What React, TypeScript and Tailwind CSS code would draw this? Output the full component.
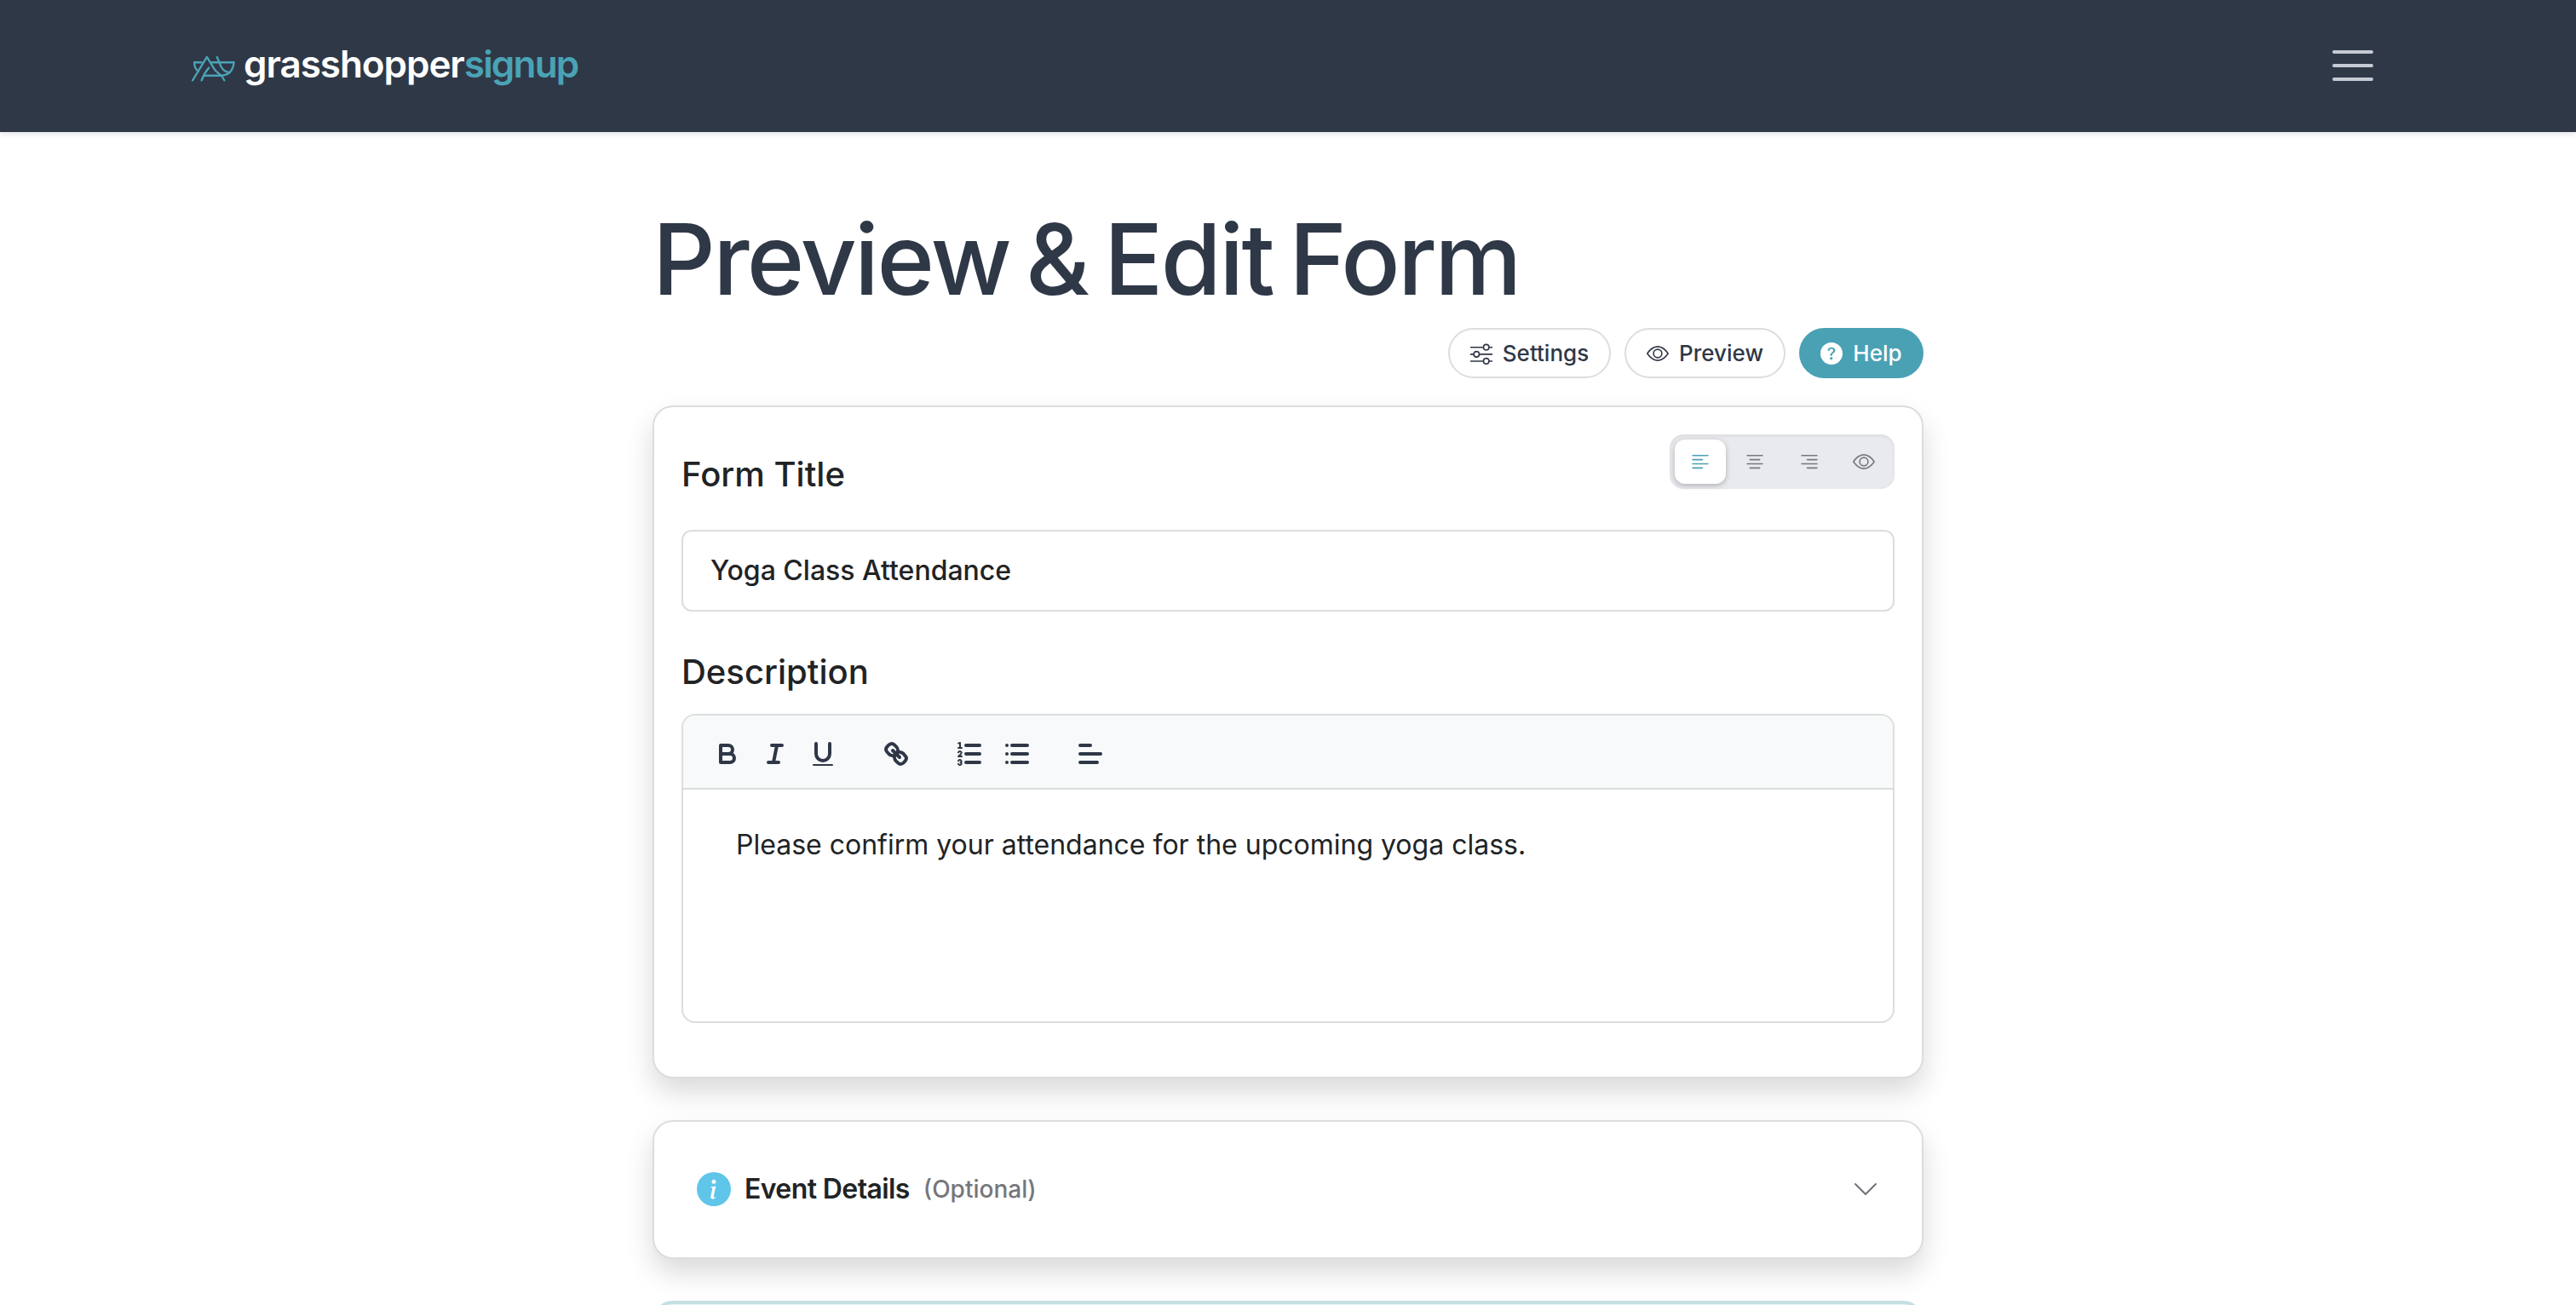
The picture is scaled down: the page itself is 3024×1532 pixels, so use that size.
import React from "react";
import {
  BsSliders,
  BsEye,
  BsQuestionCircleFill,
  BsTextLeft,
  BsTextCenter,
  BsTextRight,
  BsInfoCircleFill,
  BsChevronDown,
} from "react-icons/bs";

function ToolIcon({ children }: { children: React.ReactNode }) {
  return (
    <button className="flex h-14 w-14 items-center justify-center">
      <svg
        viewBox="0 0 18 18"
        className="h-9 w-9"
        fill="none"
        stroke="#2f3747"
        strokeWidth="2"
        strokeLinecap="round"
        strokeLinejoin="round"
      >
        {children}
      </svg>
    </button>
  );
}

function Header() {
  return (
    <header className="flex h-[155px] items-center justify-between bg-[#2f3847] pl-[224px] pr-[238px] shadow-[0_2px_6px_rgba(0,0,0,0.12)]">
      <a className="flex items-center">
        <svg
          viewBox="74 100 160 100"
          className="mt-[5px] h-[33px] w-[53px]"
          fill="none"
          stroke="#4aa3b5"
          strokeWidth="7"
          strokeLinecap="round"
          strokeLinejoin="round"
        >
          <path d="M80 192 L131 109 L155 148 Q162 160 174 168 Q186 176 193 192" />
          <path d="M112 128 H86 Q86 148 100 160" />
          <path d="M148 128 H227 Q222 175 180 175 H123" />
          <path d="M112 192 Q120 168 138 147" />
          <path d="M167 109 L180 140 Q190 162 212 164" />
        </svg>
        <span className="ml-[9px] mt-[-6px] text-[44px] font-semibold leading-none tracking-[-1.05px] text-white">
          grasshopper<span className="tracking-[-1.8px] text-[#4aa3b5]">signup</span>
        </span>
      </a>
      <button className="mb-px flex w-12 flex-col gap-3">
        <span className="h-1 rounded-full bg-[#c6cad3]" />
        <span className="h-1 rounded-full bg-[#c6cad3]" />
        <span className="h-1 rounded-full bg-[#c6cad3]" />
      </button>
    </header>
  );
}

const CARD = "rounded-[24px] border-2 border-[#dcdddd] bg-white shadow-[0_16px_32px_rgba(0,0,0,0.15)]";

export default function App() {
  return (
    <div className="h-[1532px] overflow-hidden bg-white font-['Inter',sans-serif] text-[#212325]">
      <Header />
      <main className="mx-auto w-[1492px]">
        <h1 className="mt-[78px] h-[145px] whitespace-nowrap text-[115px] font-medium leading-[144px] tracking-[-2.6px] text-[#2f3847] [word-spacing:-9px]">
          Preview &amp; Edit Form
        </h1>
        <div className="mt-[7px] flex h-[59px] justify-end gap-4 text-[26px] font-medium text-[#2f3747]">
          <button className="flex w-[191px] items-center justify-center gap-3 rounded-full border-2 border-[#dcdddd]">
            <BsSliders className="h-[26px] w-[26px]" />
            Settings
          </button>
          <button className="flex w-[189px] items-center justify-center gap-3 rounded-full border-2 border-[#dcdddd]">
            <BsEye className="h-[26px] w-[26px]" />
            Preview
          </button>
          <button className="flex w-[146px] items-center justify-center gap-3 rounded-full bg-[#4aa1b4] text-white">
            <BsQuestionCircleFill className="h-[26px] w-[26px]" />
            Help
          </button>
        </div>

        <section className={`mt-8 h-[790px] px-8 pt-8 ${CARD}`}>
          <div className="flex h-[112px] items-start justify-between">
            <h2 className="mt-[17px] text-[40px] font-medium leading-[60px]">Form Title</h2>
            <div className="flex h-16 w-[264px] items-center gap-1 rounded-[16px] bg-[#e9eaed] px-1.5 text-[#77787c] shadow-[inset_0_2px_4px_rgba(0,0,0,0.06)]">
              <button className="flex h-[52px] w-[60px] items-center justify-center rounded-[12px] bg-white text-[#4aa1b4] shadow-[0_2px_6px_rgba(0,0,0,0.25)]">
                <BsTextLeft className="h-[26px] w-[26px]" />
              </button>
              <button className="flex h-[52px] w-[60px] items-center justify-center">
                <BsTextCenter className="h-[26px] w-[26px]" />
              </button>
              <button className="flex h-[52px] w-[60px] items-center justify-center">
                <BsTextRight className="h-[26px] w-[26px]" />
              </button>
              <button className="flex h-[52px] w-[60px] items-center justify-center">
                <BsEye className="h-[26px] w-[26px]" />
              </button>
            </div>
          </div>
          <div className="flex h-[96px] items-center rounded-[12px] border-2 border-[#dcdddd] px-8 text-[32px] font-medium">
            Yoga Class Attendance
          </div>
          <h2 className="mt-[41px] text-[40px] font-medium leading-[60px]">Description</h2>
          <div className="mt-[19px] h-[363px] overflow-hidden rounded-[16px] border-2 border-[#dcdddd]">
            <div className="flex h-[87px] items-center gap-[30px] border-b-2 border-[#dcdddd] bg-[#f8f9fb] pl-6 pt-1">
              <div className="flex">
                <ToolIcon>
                  <path d="M5,4H9.5A2.5,2.5,0,0,1,12,6.5v0A2.5,2.5,0,0,1,9.5,9H5A0,0,0,0,1,5,9V4A0,0,0,0,1,5,4Z" />
                  <path d="M5,9h5.5A2.5,2.5,0,0,1,13,11.5v0A2.5,2.5,0,0,1,10.5,14H5a0,0,0,0,1,0,0V9A0,0,0,0,1,5,9Z" />
                </ToolIcon>
                <ToolIcon>
                  <path d="M7 4H13 M5 14H11 M8 14L10 4" />
                </ToolIcon>
                <ToolIcon>
                  <path d="M5,3V9a4.012,4.012,0,0,0,4,4H9a4.012,4.012,0,0,0,4-4V3" />
                  <rect x="3" y="15" width="12" height="1" rx="0.5" fill="#2f3747" stroke="none" />
                </ToolIcon>
              </div>
              <div className="flex">
                <ToolIcon>
                  <path d="M7 7L11 11" />
                  <path d="M8.9,4.577a3.476,3.476,0,0,1,.36,4.679A3.476,3.476,0,0,1,4.577,8.9C3.185,7.5,2.035,6.4,4.217,4.217S7.5,3.185,8.9,4.577Z" />
                  <path d="M13.423,9.1a3.476,3.476,0,0,0-4.679-.36,3.476,3.476,0,0,0,.36,4.679c1.392,1.392,2.5,2.542,4.679.36S14.815,10.5,13.423,9.1Z" />
                </ToolIcon>
              </div>
              <div className="flex">
                <ToolIcon>
                  <path d="M7 4H15 M7 9H15 M7 14H15" />
                  <path strokeWidth="1" d="M2.5 5.5H4.5" />
                  <path
                    fill="#2f3747"
                    stroke="none"
                    d="M3.5,6A0.5,0.5,0,0,1,3,5.5V3.085l-0.276.138A0.5,0.5,0,0,1,2.053,3c-0.124-.247-0.023-0.324.224-0.447l1-.5A0.5,0.5,0,0,1,4,2.5v3A0.5,0.5,0,0,1,3.5,6Z"
                  />
                  <path strokeWidth="1" d="M4.5,10.5h-2c0-.234,1.85-1.076,1.85-2.234A0.959,0.959,0,0,0,2.5,8.156" />
                  <path
                    strokeWidth="1"
                    d="M2.5,14.846a0.959,0.959,0,0,0,1.85-.109A0.7,0.7,0,0,0,3.75,14a0.688,0.688,0,0,0,.6-0.736,0.959,0.959,0,0,0-1.85-.109"
                  />
                </ToolIcon>
                <ToolIcon>
                  <path d="M6 4H15 M6 9H15 M6 14H15 M3 4H3 M3 9H3 M3 14H3" />
                </ToolIcon>
              </div>
              <div className="flex">
                <ToolIcon>
                  <path d="M3 9H15 M3 14H13 M3 4H9" />
                </ToolIcon>
              </div>
            </div>
            <p className="px-[62px] pt-[41px] text-[32px] leading-[48px]">
              Please confirm your attendance for the upcoming yoga class.
            </p>
          </div>
        </section>

        <section className={`mt-[49px] flex h-[163px] items-center px-[50px] pb-[2px] ${CARD}`}>
          <BsInfoCircleFill className="h-10 w-10 text-[#5fc5e9]" />
          <span className="ml-4 text-[32px] font-semibold tracking-[-0.6px]">Event Details</span>
          <span className="ml-4 text-[28px] font-medium text-[#75777b]">(Optional)</span>
          <BsChevronDown className="ml-auto h-8 w-8 text-[#6f7378]" />
        </section>

        <section className="mt-[49px] h-[160px] rounded-[24px] border-4 border-[#c5dfe3] bg-[#eaf6fa]" />
      </main>
    </div>
  );
}
